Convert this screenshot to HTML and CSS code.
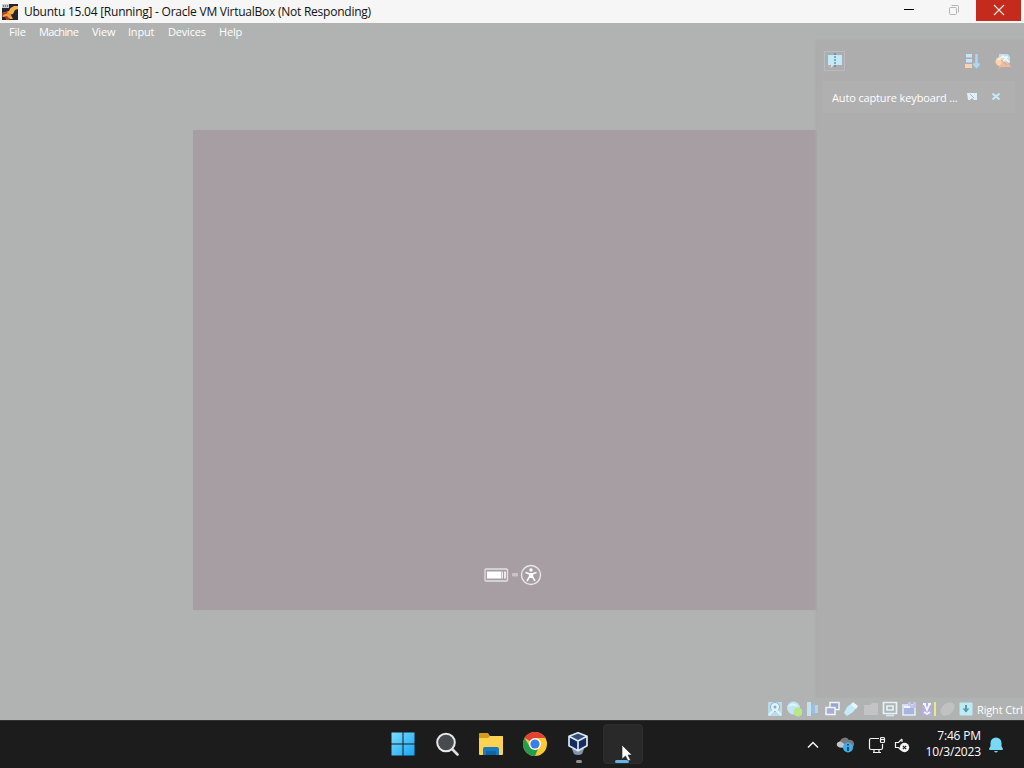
FILE: index.html
```html
<!DOCTYPE html>
<html lang="en">
<head>
    <meta charset="UTF-8">
    <meta name="viewport" content="width=device-width, initial-scale=1.0">
    <title>Ubuntu 15.04 [Running] - Oracle VM VirtualBox</title>
    <link rel="stylesheet" href="styles.css">
</head>
<body>
    <header class="titlebar">
        <svg class="app-icon" viewBox="0 0 16 16">
            <rect width="16" height="16" fill="#25232e"/>
            <path d="M16 2h-4L8.500 4 7 7 0 9v4l7-2 4-1 2-4 3-1z" fill="#f6ae48"/>
            <path d="M0 9l5-1 4 3-2 5H4l-1-4-3 1z" fill="#a83d22"/>
            <path d="M1 11l5-2 3 2 2 4H8l-3-3-4 1z" fill="#f2a03a"/>
            <path d="M0 0h7v4H0z" fill="#c9cbd0"/>
            <path d="M1 1h1v2H1zM3 1h1v2H3zM5 1h1v2H5z" fill="#777"/>
        </svg>
        <h1 class="title">Ubuntu 15.04 [Running] - Oracle VM VirtualBox (Not Responding)</h1>
        <div class="window-buttons">
            <button class="win-btn"><svg viewBox="0 0 12 12"><path d="M1 5.500h10" stroke="#000"/></svg></button>
            <button class="win-btn"><svg viewBox="0 0 12 12" fill="none" stroke="#b4b4b4"><rect x="1.5" y="3.5" width="7" height="7" rx="1"/><path d="M3.5 1.5h6q1 0 1 1v6"/></svg></button>
            <button class="win-btn close"><svg viewBox="0 0 12 12"><path d="M1 1l10 10M11 1L1 11" stroke="#fbe9e6" stroke-width="1.1"/></svg></button>
        </div>
    </header>

    <main class="vm-window">
        <nav class="menubar">
            <span class="m-file">File</span>
            <span class="m-machine">Machine</span>
            <span class="m-view">View</span>
            <span class="m-input">Input</span>
            <span class="m-devices">Devices</span>
            <span class="m-help">Help</span>
        </nav>

        <div class="workspace">
            <section class="guest-screen">
                <svg class="boot-icons" viewBox="0 0 58 22" fill="none">
                    <rect x="1" y="5" width="22.500" height="12" rx="1" stroke="#e6dfe3" stroke-width="1.300"/>
                    <path d="M3 7.500h14v7H3z" fill="#fff"/>
                    <path d="M17.500 7.500h1.500v7h-1.500zM20 7.500h2v7h-2z" fill="#eee9ec"/>
                    <rect x="28" y="9" width="6" height="3.500" rx="1" fill="#cbc1c7"/>
                    <circle cx="47" cy="11" r="9.500" stroke="#ebe5e9" stroke-width="1.400"/>
                    <circle cx="47" cy="6" r="1.700" fill="#fff"/>
                    <path d="M41.500 8.500l4 1.200v3L43 17M52.500 8.500l-4 1.200v3L51 17" stroke="#fff" stroke-width="1.500"/>
                    <path d="M45 9h4v5h-4z" fill="#fff"/>
                </svg>
            </section>

            <aside class="notifications">
                <div class="notif-tools">
                    <span class="notif-toggle">
                        <svg viewBox="0 0 16 16"><path d="M1 2h14v10H7l-3 3v-3H1z" fill="#c2e9f7"/><path d="M8 0v14" stroke="#557f92" stroke-width="1.200" stroke-dasharray="2 1"/><path d="M1 13l3 2 2-2" stroke="#dcb4a5" fill="none"/></svg>
                    </span>
                    <svg class="tool sort" viewBox="0 0 16 16">
                        <path d="M2 1h6v3.500H2zM2 6h6v3.500H2z" fill="#c5e6f8"/><path d="M1 11h7v4H1z" fill="#fad3ad"/>
                        <path d="M12.500 1v12M9.500 10.500l3 3.500 3-3.500" stroke="#a8d8fa" stroke-width="2.400" fill="none"/>
                    </svg>
                    <svg class="tool" viewBox="0 0 16 16">
                        <path d="M4 1h9l2 3v6H4z" fill="#c1e0ea"/>
                        <circle cx="5" cy="8.500" r="4.500" fill="#fad3a8"/>
                        <path d="M3 7l5-4 6 6M8 8l5-4M6 4h7" stroke="#eaf8fc" stroke-width="1.500" fill="none"/>
                        <path d="M7 9h6l3 5H6l-3 2z" fill="#f6b79d"/>
                        <path d="M6 7l6 5" stroke="#a3b4ba"/>
                    </svg>
                </div>
                <div class="notif-item">
                    <span class="notif-text">Auto capture keyboard ...</span>
                    <svg viewBox="0 0 10 10"><path d="M0 1h10v7H7L5 6 3 8H1z" fill="#e0eff5"/><path d="M3 2l4 4" stroke="#a5b8c1"/></svg>
                    <svg viewBox="0 0 10 10"><path d="M1.500 1.500l7 6M8.500 1.500l-7 6" stroke="#c4e8fc" stroke-width="2.300"/></svg>
                </div>
            </aside>
        </div>

        <footer class="statusbar">
            <div class="status-icons">
                <svg viewBox="0 0 16 16"><path d="M1 1h14v14H1z" fill="#b9dbea"/><circle cx="8" cy="6" r="4.500" fill="#e2f4fa" stroke="#8eb7cd"/><path d="M2 14l6-6 6 6" stroke="#e5f4fa" stroke-width="2" fill="none"/><circle cx="8" cy="6" r="1.500" fill="#83afc9"/></svg>
                <svg viewBox="0 0 16 16"><circle cx="7.500" cy="7" r="6.500" fill="#bfe6f2"/><path d="M3 5q4-3 8 0" stroke="#e2f5fa" stroke-width="2" fill="none"/><circle cx="12" cy="11" r="4.500" fill="#b8e68d"/></svg>
                <svg viewBox="0 0 16 16"><path d="M2 1h4v14H2z" fill="#c3e2f2"/><path d="M6 5l4-3v12l-4-3z" fill="#9bbfdc"/><path d="M10 4h3v8h-3z" fill="#bbd3e3"/></svg>
                <svg viewBox="0 0 16 16" stroke="#f1f4fc" stroke-width="1.500"><path d="M6 1.500h9v7H6z" fill="#9ba4cd"/><path d="M2 6.500h9v7H2z" fill="#a7aed4"/></svg>
                <svg viewBox="0 0 16 16"><path d="M1 12l3-6 5-4 5 4-4 5-6 4z" fill="#c3ebf8"/><path d="M10 1l5 4-2 3-5-4z" fill="#e9f6fa"/></svg>
                <svg viewBox="0 0 16 16"><path d="M1 4h6l2-2h6v12H1z" fill="#c3c3c5"/></svg>
                <svg viewBox="0 0 16 16" fill="none" stroke="#e2f3fa" stroke-width="1.700"><path d="M1.500 1.500h13v11h-13zM5 5h6v4H5z"/><path d="M4 14.500h8" stroke="#d2e7f0"/></svg>
                <svg viewBox="0 0 16 16"><path d="M2 4h12v10H2z" fill="#a6b4df" stroke="#e2eefb" stroke-width="1.500"/><path d="M7 1h3v3h2V1h3v6H7z" fill="#c0c6ec"/><path d="M3 6h6" stroke="#f3f6ff" stroke-width="2"/></svg>
                <svg viewBox="0 0 16 16"><path d="M2 1h10v14H2z" fill="#b3afdc"/><path d="M3 3h3M8 3h3M4.500 3L7 9l2.500-6M4 11l3 2 3-2" stroke="#f6f5ff" stroke-width="1.800" fill="none"/><path d="M15 1v14" stroke="#e7e891" stroke-width="2"/></svg>
                <svg viewBox="0 0 16 16"><ellipse cx="8.500" cy="8" rx="8" ry="5.500" transform="rotate(-40 8.500 8)" fill="#c1c1c1"/></svg>
                <svg viewBox="0 0 16 16"><rect x="1.500" y="1.500" width="13" height="13" rx="1" fill="#bcebf5"/><path d="M8 4v7" stroke="#5f98aa" stroke-width="2"/><path d="M4.500 7.500h7L8 11.500z" fill="#5f98aa"/></svg>
            </div>
            <span class="host-key">Right Ctrl</span>
        </footer>
    </main>

    <div class="taskbar">
        <div class="pinned">
            <span class="task"><svg viewBox="0 0 24 24"><defs><linearGradient id="win" x1="0" y1="0" x2="1" y2="1"><stop offset="0" stop-color="#78dfff"/><stop offset="1" stop-color="#17a4f5"/></linearGradient></defs><path d="M.5 .5h11v11H.5zM12.500 .5h11v11h-11zM.5 12.500h11v11H.5zM12.500 12.500h11v11h-11z" fill="url(#win)"/></svg></span>
            <span class="task"><svg viewBox="0 0 24 24"><path d="M17.500 17.500l5 5" stroke="#dedede" stroke-width="2.600" stroke-linecap="round"/><circle cx="11" cy="10.500" r="8.800" fill="#484a4d" stroke="#e7e7e7" stroke-width="2"/></svg></span>
            <span class="task"><svg viewBox="0 0 24 24"><path d="M0 2q0-1 1-1h8l2 3h12q1 0 1 1v5H0z" fill="#d79b1b"/><path d="M0 6h9l2-2h12q1 0 1 1v17q0 1-1 1H1q-1 0-1-1z" fill="#fdd253"/><path d="M4 23v-6q0-2 2-2h12q2 0 2 2v6z" fill="#1979bf"/><path d="M7 19h10v4H7z" fill="#0e65a5"/></svg></span>
            <span class="task"><svg viewBox="0 0 24 24"><circle cx="12" cy="12" r="12" fill="#fbc934"/><path d="M12 12L1.600 6A12 12 0 0 1 22.400 6H12z" fill="#e34233"/><path d="M12 24A12 12 0 0 1 1.600 6L7 15l5 3 3-1z" fill="#259b4c"/><circle cx="12" cy="12" r="6" fill="#fff"/><circle cx="12" cy="12" r="4.600" fill="#3c7fe7"/></svg></span>
            <span class="task running"><svg viewBox="0 0 24 24"><path d="M6 17q6-3 12 0l-2 5q-4 2-8 0z" fill="#8295af"/><path d="M12 0l9.500 4v10L12 19l-9.500-5V4z" fill="#152d5c"/><path d="M12 0l9.500 4L12 9 2.500 4z" fill="#324e79"/><path d="M12 .8l9 3.500v9.500l-9 5-9-5V4.300zM3 4.300L12 9l9-4.700M12 9v9" stroke="#dbe7f2" stroke-width="1.700" fill="none" stroke-linejoin="round"/></svg></span>
            <span class="task active">
                <svg class="cursor" viewBox="0 0 12 18"><path d="M1 1v14l3.500-3 2.500 5 2.500-1-2.500-5H11z" fill="#fff" stroke="#222" stroke-width=".6"/></svg>
            </span>
        </div>
        <div class="tray">
            <svg class="chevron" viewBox="0 0 12 12"><path d="M1 8.500l5-5 5 5" stroke="#f2f2f2" stroke-width="1.500" fill="none"/></svg>
            <svg class="cloud" viewBox="0 0 18 16"><path d="M4 11a4 4 0 0 1 0-7 5 5 0 0 1 9-1 4 4 0 0 1 2 8z" fill="#77797b"/><path d="M3 10q-3-1-2-4 3-3 6 0l6 5z" fill="#c2c5c7"/><circle cx="12" cy="10.500" r="5" fill="#3fadea"/><path d="M12 7v1.500M12 10v4" stroke="#102c40" stroke-width="1.500"/></svg>
            <svg class="network" viewBox="0 0 18 18" fill="none" stroke="#f3f3f3" stroke-width="1.200"><path d="M11 2.500H3q-1.500 0-1.500 1.500v8q0 1.500 1.500 1.500h10q1.500 0 1.500-1.500V8M5 16.500h8M6 13.500v3M11 13.500v3"/><rect x="12.500" y="1.500" width="4" height="5" rx="1"/><path d="M12.500 3.500h4"/></svg>
            <svg class="volume" viewBox="0 0 16 16" fill="none"><path d="M8 2v3M8 2L4.500 5.500H1.500v5h3L7 13" stroke="#f3f3f3" stroke-width="1.200"/><circle cx="10.500" cy="10.500" r="4.700" fill="#f5f5f5"/><path d="M8.800 8.800l3.400 3.400M12.200 8.800l-3.400 3.400" stroke="#222" stroke-width="1.200"/></svg>
            <div class="clock"><span class="time">7:46 PM</span><span class="date">10/3/2023</span></div>
            <svg class="bell" viewBox="0 0 16 16"><path d="M1 12l1.500-3V6a5.500 5.500 0 0 1 11 0v3l1.500 3q0 1-1 1H2q-1 0-1-1zM6 14h4q-2 3-4 0z" fill="#79d9f4"/></svg>
        </div>
    </div>
</body>
</html>
```

FILE: styles.css
```css
* {
    box-sizing: border-box;
}

body {
    margin: 0;
    height: 768px;
    display: flex;
    flex-direction: column;
    overflow: hidden;
    font-family: "Open Sans", "Noto Sans", sans-serif;
    background: #1c1c1c;
}

svg {
    display: block;
    flex: none;
}

.titlebar {
    height: 23px;
    display: flex;
    align-items: center;
    padding-left: 2px;
    background: #f6f6f6;
}

.app-icon {
    width: 16px;
    height: 16px;
    margin-right: 6px;
}

.title {
    margin: 0;
    font-size: 12px;
    font-weight: normal;
    line-height: 22px;
    letter-spacing: -0.24px;
    white-space: nowrap;
    color: #111;
}

.window-buttons {
    display: flex;
    align-self: flex-start;
    margin-left: auto;
    padding-right: 3px;
}

.win-btn {
    width: 45px;
    height: 21px;
    padding: 0;
    border: none;
    background: none;
    display: flex;
    align-items: center;
    justify-content: center;
}

.win-btn svg {
    width: 12px;
    height: 12px;
    margin-bottom: 1px;
}

.win-btn.close {
    background: #c42b1c;
}

.vm-window {
    flex: 1;
    display: flex;
    flex-direction: column;
    background: #b0b3b1;
}

.menubar {
    height: 17px;
    display: flex;
    gap: 14px;
    padding-left: 9px;
    font-size: 11px;
    line-height: 18px;
    letter-spacing: -0.2px;
    color: #fff;
}

.m-file { width: 16px; }
.m-machine { width: 39px; letter-spacing: -0.65px; }
.m-view { width: 22px; }
.m-input { width: 26px; }
.m-devices { width: 37px; }
.m-help { width: 22px; }

.workspace {
    height: 657px;
    display: flex;
    justify-content: flex-end;
}

.guest-screen {
    width: 624px;
    height: 480px;
    margin-top: 90px;
    padding: 434px 0 0 291px;
    background: #a79ea3;
    box-shadow: 0 0 1px #b5aeb2;
}

.boot-icons {
    width: 58px;
    height: 22px;
}

.notifications {
    width: 207px;
    background: #adadad;
    box-shadow: -1px 0 2px #a9abaa;
}

.notif-tools {
    height: 41px;
    display: flex;
    align-items: center;
    padding: 0 13px 0 7px;
}

.notif-toggle {
    width: 21px;
    height: 20px;
    display: flex;
    align-items: center;
    justify-content: center;
    border: 1px solid #b7bdc0;
    margin-right: auto;
}

.notif-tools svg {
    width: 16px;
    height: 16px;
}

.sort {
    margin-right: 15px;
}

.notif-item {
    height: 32px;
    margin: 0 9px 0 6px;
    padding-left: 9px;
    display: flex;
    align-items: center;
    background: #b0b0b0;
}

.notif-text {
    width: 136px;
    font-size: 11px;
    letter-spacing: -0.14px;
    white-space: nowrap;
    color: #fff;
}

.notif-item svg {
    width: 10px;
    height: 10px;
    margin-right: 14px;
}

.statusbar {
    height: 23px;
    display: flex;
    justify-content: flex-end;
    align-items: center;
}

.status-icons {
    display: flex;
    gap: 3.1px;
}

.status-icons svg {
    width: 16px;
    height: 16px;
}

.host-key {
    width: 47px;
    margin-left: 3px;
    margin-top: 2px;
    font-size: 11px;
    letter-spacing: -0.15px;
    white-space: nowrap;
    color: #fff;
}

.taskbar {
    height: 48px;
    display: flex;
    padding-left: 381px;
    border-top: 1px solid #303030;
    background: #1c1c1c;
}

.pinned {
    display: flex;
}

.task {
    position: relative;
    width: 44px;
    height: 46px;
    display: flex;
    align-items: center;
    justify-content: center;
}

.task svg {
    width: 24px;
    height: 24px;
}

.task.running svg {
    margin-right: 2px;
}

.task.active {
    width: 40px;
    height: 40px;
    margin: 3px 2px;
    border-radius: 4px;
    background: #292929;
    border: 1px solid #2e2e2e;
}

.running::after, .active::after {
    content: "";
    position: absolute;
    left: 19px;
    bottom: 4px;
    width: 6px;
    height: 3px;
    border-radius: 2px;
    background: #929292;
}

.active::after {
    left: 11px;
    bottom: 0;
    width: 14px;
    background: #5eb5e8;
}

.active .cursor {
    position: absolute;
    z-index: 1;
    left: 17px;
    top: 19px;
    width: 12px;
    height: 18px;
}

.tray {
    flex: 1;
    display: flex;
    align-items: center;
    justify-content: flex-end;
    padding-right: 20px;
    color: #fff;
}

.chevron {
    width: 12px;
    height: 12px;
    margin-right: 17px;
}

.cloud {
    width: 18px;
    height: 16px;
    margin-right: 14px;
}

.network {
    width: 18px;
    height: 18px;
    margin-right: 8px;
}

.volume {
    width: 16px;
    height: 16px;
}

.clock {
    width: 71px;
    display: flex;
    flex-direction: column;
    align-items: flex-end;
    margin-top: -2px;
    font-size: 12px;
    line-height: 16px;
    letter-spacing: -0.15px;
    white-space: nowrap;
}

.bell {
    width: 16px;
    height: 16px;
    margin-left: 7px;
}
```
